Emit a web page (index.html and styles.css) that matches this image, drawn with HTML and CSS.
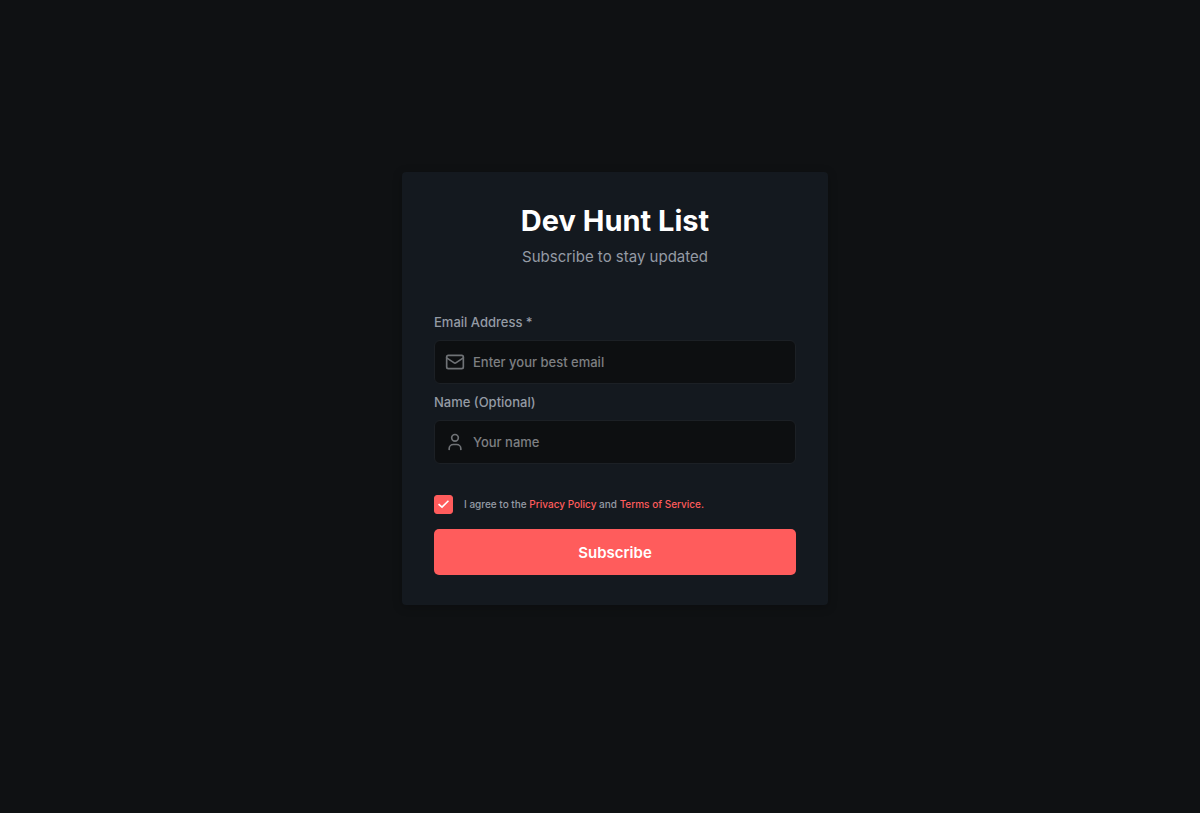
FILE: index.html
```html
<!DOCTYPE html>
<html lang="en">
  <head>
    <meta charset="UTF-8" />
    <meta name="viewport" content="width=device-width, initial-scale=1.0" />
    <title>Dev Hunt List</title>
    <link rel="stylesheet" href="styles.css">
  </head>
  <body>
    <main class="card">
      <header class="card-header">
        <h1>Dev Hunt List</h1>
        <p>Subscribe to stay updated</p>
      </header>
      <form action="#" method="POST" id="subscribeForm">
        <label class="field-label" for="email">Email Address *</label>
        <div class="field">
          <svg class="icon" viewBox="0 0 24 24" aria-hidden="true">
            <rect x="2" y="4" width="20" height="16" rx="2" />
            <path d="M2 7l8.6 5.8a2.4 2.4 0 0 0 2.8 0L22 7" />
          </svg>
          <input type="email" id="email" name="email" placeholder="Enter your best email" />
        </div>
        <label class="field-label" for="name">Name (Optional)</label>
        <div class="field">
          <svg class="icon" viewBox="0 0 24 24" aria-hidden="true">
            <circle cx="12" cy="7" r="4" />
            <path d="M5 21v-1a5 5 0 0 1 5-5h4a5 5 0 0 1 5 5v1" />
          </svg>
          <input type="text" id="name" name="name" placeholder="Your name" />
        </div>
        <div class="terms">
          <input type="checkbox" id="agree" name="agree" checked />
          <label for="agree">
            I agree to the <a href="#">Privacy Policy</a> and
            <a href="#">Terms of Service.</a>
          </label>
        </div>
        <button type="submit">Subscribe</button>
      </form>
    </main>
  </body>
</html>
```
FILE: styles.css
```css
* {
  box-sizing: border-box;
}

body {
  font-family: Inter, sans-serif;
  margin: 0;
  min-height: 100vh;
  padding: 0 0 36px 30px;
  display: flex;
  align-items: center;
  justify-content: center;
  background-color: #0f1113;
  color: #949ba5;
}

.card {
  width: 100%;
  max-width: 426px;
  padding: 31px 32px 30px;
  border-radius: 4px;
  background-color: #14191f;
  box-shadow: 0 2px 10px rgba(0, 0, 0, 0.25);
}

.card-header {
  margin-bottom: 43px;
  text-align: center;
}

h1 {
  margin: 0 0 6px;
  font-size: 29px;
  line-height: 36px;
  font-weight: 700;
  color: #fff;
}

.card-header p {
  margin: 0;
  font-size: 15px;
  line-height: 24px;
}

.field-label {
  display: block;
  margin-bottom: 8px;
  font-size: 13px;
  line-height: 20px;
  font-weight: 500;
}

.field {
  display: flex;
  align-items: center;
  gap: 8px;
  height: 44px;
  margin-bottom: 8px;
  padding: 0 10px;
  border: 1px solid #1c2025;
  border-radius: 6px;
  background-color: #0d0f11;
}

.field:focus-within {
  border-color: #ff5c5c;
}

.icon {
  flex: none;
  width: 20px;
  height: 20px;
  fill: none;
  stroke: #6f7276;
  stroke-width: 2;
  stroke-linecap: round;
  stroke-linejoin: round;
}

.field input {
  flex: 1;
  min-width: 0;
  padding: 0;
  border: none;
  outline: none;
  background: none;
  font-family: inherit;
  font-size: 13px;
  font-weight: 500;
  color: #fff;
}

.field input::placeholder {
  color: #7d7f82;
}

.terms {
  display: flex;
  align-items: center;
  gap: 11px;
  margin: 31px 0 15px;
  font-size: 10px;
  line-height: 19px;
  font-weight: 500;
}

.terms input {
  appearance: none;
  width: 19px;
  height: 19px;
  margin: 0;
  display: grid;
  place-content: center;
  border: 1px solid #ff5c5c;
  border-radius: 3px;
  cursor: pointer;
}

.terms input:checked {
  background-color: #ff5c5c;
}

.terms input:checked::before {
  content: "";
  width: 11px;
  height: 9px;
  background-color: #fff;
  clip-path: polygon(0 52%, 10% 40%, 36% 68%, 90% 3%, 100% 14%, 37% 92%);
}

.terms a {
  color: #ff5c5c;
  text-decoration: none;
}

button {
  display: block;
  width: 100%;
  height: 46px;
  border: none;
  border-radius: 5px;
  background-color: #ff5c5c;
  font-family: inherit;
  font-size: 15px;
  font-weight: 600;
  color: #fff;
  cursor: pointer;
}

button:hover {
  background-color: #f04f4f;
}
```
